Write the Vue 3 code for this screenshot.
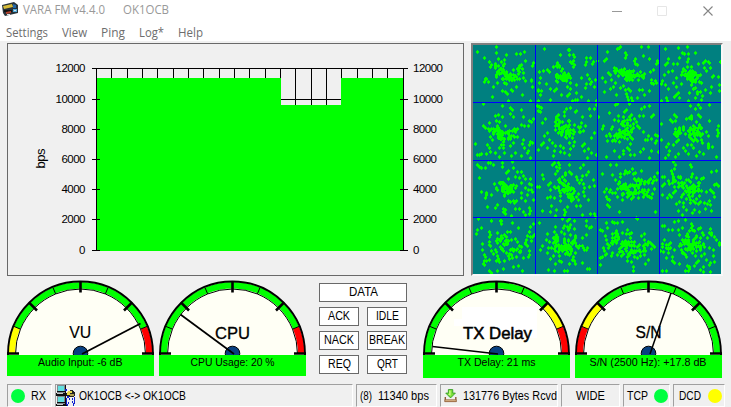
<script setup>
import { h } from 'vue'

// Single line of text fitted to an exact advance width
const Fit = (props) =>
  h('svg', { width: props.w, height: 15, viewBox: `0 0 ${props.w} 15`, style: { display: 'block', overflow: 'visible', flex: 'none' } }, [
    h('text', { x: 0, y: 12, textLength: props.w, lengthAdjust: 'spacingAndGlyphs', fill: 'currentColor', 'xml:space': 'preserve' }, props.t)
  ])
Fit.props = ['t', 'w']

const menu = [['Settings', 42], ['View', 25], ['Ping', 24], ['Log*', 25], ['Help', 25]]

const levels = [
  [12000, 68], [10000, 99], [8000, 129], [6000, 159], [4000, 189], [2000, 219], [0, 250]
]
const grid = [111, 127, 142, 157, 173, 188, 203, 219, 234, 249, 265, 280, 295, 311, 326, 341, 357, 372, 387]

// Constellation samples: each block has an origin in px, points in thirds of a px,
// and dense cores given as centre x, centre y, spread x, spread y, count
const blocks = [
  { ox: -5, oy: -5, cells: [
    { c: [[98, 92, 12, 12, 20], [124, 114, 15, 12, 24], [150, 92, 9, 16, 9]],
      p: '28,36 49,54 85,21 85,40 100,66 109,72 109,60 64,66 70,76 67,82 145,42 157,42 115,46 169,36 172,63 160,75 148,87 196,69 193,78 154,96 55,117 49,126 61,126 52,117 88,130 85,112 76,142 73,170 103,154 112,157 118,163 130,151 145,142 154,118 172,124 166,114 190,123 193,141 190,120 121,184 187,184 163,165 133,154 90,58' },
    { c: [[290, 112, 20, 12, 38], [268, 76, 8, 6, 8], [317, 65, 5, 9, 7]],
      p: '229,27 277,45 301,30 304,30 304,45 355,54 367,54 355,66 352,75 376,66 373,72 388,63 319,52 214,96 226,94 238,91 244,96 217,114 214,130 211,153 221,154 217,166 211,150 247,148 259,154 235,133 265,147 298,142 307,148 304,163 298,169 325,160 328,181 322,181 355,132 352,145 370,127 367,133 382,121 379,142 340,115 358,106 364,118 340,172 361,184 280,166 247,181 211,184 325,136 313,184 385,184' },
    { c: [[108, 282, 17, 15, 38], [80, 269, 12, 5, 8], [145, 271, 11, 5, 7]],
      p: '46,192 103,198 82,228 91,226 127,205 133,211 127,222 136,231 103,231 160,211 166,232 160,256 169,259 181,259 184,243 190,247 196,238 64,249 46,258 52,264 61,268 85,244 94,247 88,258 76,282 67,292 22,312 58,315 64,324 67,337 55,342 40,342 34,345 28,345 82,339 94,325 106,325 100,316 127,318 136,309 148,292 166,300 163,312 187,306 184,315 193,309 169,324 181,333 178,339 94,351 142,339 160,348 130,348 109,340 187,355' },
    { c: [[292, 273, 11, 18, 34], [268, 248, 8, 8, 9], [320, 266, 13, 12, 9]],
      p: '208,198 214,201 211,213 220,205 217,217 232,237 223,249 271,226 265,231 295,208 289,217 289,229 307,204 322,217 325,213 343,231 367,229 364,208 379,208 385,195 340,249 352,258 346,272 334,277 379,279 370,295 262,258 262,271 271,279 238,279 229,289 244,300 253,309 262,319 238,325 226,309 220,316 211,330 259,333 277,318 286,324 277,336 289,339 307,327 316,319 304,345 343,319 349,312 361,327 349,333 370,339 358,354 385,345 256,348 313,294 319,306' }
  ] },
  { ox: 123, oy: -5, cells: [
    { c: [[98, 105, 17, 11, 38], [72, 99, 11, 9, 10], [137, 107, 16, 8, 10]],
      p: '70,24 64,27 73,22 34,36 31,57 25,63 88,40 91,46 88,55 136,21 157,21 142,48 160,57 115,63 118,72 124,75 187,66 181,73 184,64 118,57 55,85 55,93 37,99 43,105 19,114 28,126 46,120 25,156 43,147 58,129 52,142 61,165 73,144 82,138 88,150 97,148 103,153 91,163 94,172 97,181 109,184 124,175 130,151 139,151 145,166 160,153 166,130 172,132 181,129 166,120 163,97 172,90 178,123 106,175' },
    { c: [[285, 102, 17, 14, 44], [303, 120, 8, 10, 7]],
      p: '208,27 217,58 247,24 274,22 259,40 265,42 277,43 298,39 208,75 214,69 232,72 250,54 244,72 277,58 274,67 307,72 322,69 328,64 340,69 337,66 325,84 331,94 343,85 373,67 352,109 367,112 346,142 370,136 343,159 328,151 370,153 205,105 199,123 208,135 196,132 217,148 211,174 229,94 217,97 241,115 232,130 241,141 247,160 256,132 235,172 241,166 286,136 292,148 280,160 277,183 298,174 304,156 313,157 319,169 304,163 250,174 214,184 196,184 316,181 349,111' },
    { c: [[94, 265, 15, 14, 24], [73, 291, 18, 8, 22]],
      p: '100,192 40,219 7,231 58,195 64,192 67,228 85,217 91,211 82,232 100,231 106,226 115,238 130,228 142,229 136,207 145,201 160,199 172,226 166,232 112,252 121,246 124,258 130,264 55,241 67,244 49,262 46,268 22,258 19,268 31,288 43,288 40,282 34,303 49,303 31,351 55,333 82,333 94,324 82,342 100,330 103,345 115,346 133,336 157,288 154,301 166,297 178,285 184,288 181,304 178,310 142,277 148,300 109,298 103,312 142,327 166,333 187,336 160,354 70,351' },
    { c: [[290, 274, 16, 14, 35], [279, 234, 8, 5, 7], [241, 290, 5, 14, 8]],
      p: '340,195 307,195 298,207 313,204 283,199 235,226 241,231 238,244 196,252 223,241 229,247 307,226 313,231 340,244 367,259 364,271 367,279 364,288 238,268 250,264 262,270 253,279 241,279 310,255 316,264 301,246 331,277 337,288 337,312 337,318 337,325 319,309 316,301 304,303 292,303 286,316 292,324 310,336 322,342 349,321 247,300 232,315 217,312 211,321 196,300 220,333 217,345 238,352 247,342 262,324 274,315 268,333 277,342 301,348 361,351 208,354' }
  ] },
  { ox: -5, oy: 113, cells: [
    { c: [[116, 91, 18, 13, 45], [96, 73, 10, 8, 8]],
      p: '28,21 34,27 40,30 61,15 67,16 76,21 103,27 103,15 52,30 121,40 115,45 133,12 136,30 160,43 148,42 34,60 154,60 142,58 166,55 172,63 187,64 184,78 190,81 190,97 181,97 172,90 160,75 178,111 193,102 40,102 55,106 52,121 55,112 70,111 58,147 88,142 82,150 106,153 112,156 106,162 112,168 109,115 121,130 127,132 136,130 139,135 145,130 160,106 160,120 154,154 172,129 184,151 187,160 184,169 172,172 166,163 142,154 130,174 196,127' },
    { c: [[294, 96, 15, 15, 35], [278, 73, 10, 12, 12], [316, 113, 12, 11, 10]],
      p: '259,15 271,15 274,21 274,30 268,40 262,48 253,21 265,27 223,52 226,63 208,87 214,88 247,75 241,82 247,96 262,91 247,117 238,120 259,120 292,52 292,46 304,43 310,48 304,21 337,30 346,21 361,43 343,55 355,52 328,66 340,67 334,76 349,91 346,78 376,67 364,88 379,85 325,58 331,127 325,144 337,144 349,115 361,126 346,103 367,168 379,168 382,177 310,130 298,147 289,156 292,162 289,172 265,157 262,174 247,163 250,144 223,160 343,172' },
    { c: [[482, 95, 16, 13, 40], [517, 79, 11, 12, 13], [459, 81, 10, 10, 9], [525, 105, 10, 7, 7]],
      p: '427,21 445,22 403,48 433,51 442,66 457,58 457,48 469,48 472,40 478,45 484,43 493,33 496,48 502,45 499,63 520,67 541,70 568,46 559,58 547,64 556,69 553,76 541,76 559,93 565,67 541,97 553,109 544,118 550,121 538,115 427,97 415,94 409,102 424,102 433,106 442,106 415,117 418,123 424,127 418,142 424,147 454,162 448,117 463,112 463,126 478,117 490,124 496,118 505,106 511,120 514,103 526,118 535,111 520,40 562,163' },
    { c: [[667, 95, 20, 14, 45], [626, 66, 9, 9, 10]],
      p: '583,57 589,57 610,39 613,48 619,34 622,22 667,22 670,27 616,13 601,69 604,78 589,78 583,84 616,72 619,87 622,99 616,105 631,57 643,75 655,66 673,49 670,58 661,66 685,60 700,64 706,61 691,75 745,39 730,42 715,102 727,97 739,81 745,79 751,85 736,106 739,117 733,102 724,129 727,142 709,136 718,139 694,115 685,123 697,132 691,138 676,129 682,136 667,127 667,136 655,124 646,135 634,133 625,138 640,117 604,112 583,112 598,120 610,118 631,160 646,147 655,156 673,166 679,157 694,162 712,153 643,172 730,159' },
    { c: [[104, 250, 13, 14, 24], [132, 278, 15, 10, 12]],
      p: '31,184 70,190 100,189 100,198 97,190 133,196 40,210 28,216 25,228 64,223 67,232 64,238 64,253 67,264 88,226 127,222 151,210 187,207 196,198 184,222 178,235 187,238 175,246 172,256 190,250 193,238 199,232 178,265 184,280 184,291 181,297 142,243 130,246 148,252 154,264 145,276 154,282 160,267 172,259 43,258 64,261 43,276 70,280 76,288 85,282 88,294 91,303 82,277 49,291 52,297 64,307 55,309 49,309 49,322 46,318 64,339 85,309 94,312 109,309 121,295 124,303 133,301 145,297 88,339 106,333 136,327 151,324 70,345 163,339 166,300' },
    { c: [[292, 264, 17, 15, 45], [262, 250, 9, 8, 10]],
      p: '214,195 262,207 283,184 298,190 304,184 319,190 289,205 298,207 304,211 286,210 301,217 319,213 307,201 355,190 355,204 370,208 364,210 280,223 289,229 307,231 355,232 343,241 259,223 265,232 238,229 256,241 262,237 235,246 244,253 241,270 250,271 262,264 262,279 223,265 217,277 238,285 256,295 271,282 319,246 322,235 334,264 343,264 346,270 349,276 358,270 355,277 331,270 310,279 322,285 304,291 292,289 316,297 313,307 319,309 322,318 304,318 247,303 280,312 262,318 274,309 241,337 259,340 289,339 298,339 358,333 364,334 343,315' },
    { c: [[480, 264, 17, 14, 32], [445, 244, 13, 11, 14], [514, 267, 16, 10, 10]],
      p: '415,195 433,193 439,195 448,195 463,192 505,180 508,184 397,216 403,219 397,216 418,211 445,219 442,226 433,228 445,235 478,217 484,228 490,225 475,228 463,225 529,229 520,235 529,246 532,258 541,253 547,256 559,268 550,273 553,262 538,262 412,235 415,246 430,255 424,264 418,258 406,270 421,270 409,279 412,291 403,297 397,301 415,289 433,286 430,294 454,273 454,282 448,291 460,295 466,289 478,297 484,291 496,285 499,297 508,300 517,294 529,291 541,307 496,327 496,339 478,310 397,321 490,312 526,264 532,318' },
    { c: [[666, 258, 20, 13, 36], [689, 262, 10, 6, 10]],
      p: '589,204 583,205 601,216 613,217 619,192 631,189 652,187 643,210 670,198 673,204 670,211 664,219 673,217 679,220 691,214 697,210 727,213 730,225 724,225 703,225 706,232 631,216 634,232 658,228 655,235 661,237 685,235 697,241 589,246 583,258 595,262 601,262 607,256 595,270 583,267 607,270 601,274 577,280 586,283 601,286 619,276 634,264 640,277 646,285 652,291 655,297 643,285 673,286 685,280 697,276 709,268 718,241 730,232 739,237 724,270 736,276 754,262 754,256 745,246 709,289 700,294 682,295 613,297 595,300 619,316 613,309 658,324 664,333 661,339 664,328 685,315 691,310 679,325 715,307 724,321 727,316 736,294 706,327 739,313 583,340 595,340 706,342 727,343 652,340 634,318 697,337' }
  ] }
]

let seed = 4471
const rnd = () => (seed = (seed * 16807) % 2147483647) / 2147483647
const gauss = () => rnd() + rnd() + rnd() + rnd() - 2

const diamond = (x, y) => `M${x} ${y - 2}h1v1h1v2h-1v1h-1v-1h-1v-2h1z`
const dots = blocks.map(b => b.cells.map(cell => {
  const pts = cell.p.split(' ').map(s => s.split(',').map(Number))
  for (const [cx, cy, sx, sy, n] of cell.c) {
    for (let i = 0; i < n; i++) pts.push([cx + gauss() * sx * 1.4, cy + gauss() * sy * 1.4])
  }
  return pts.map(([x, y]) => diamond(Math.floor(x / 3) + b.ox, Math.round(y / 3) + b.oy)).join('')
}).join('')).join('')

// Arc between two angles (degrees, counter-clockwise from the right)
const pt = (r, a) => [73.5 + r * Math.cos(a * Math.PI / 180), 74 - r * Math.sin(a * Math.PI / 180)]
const band = (a, b) => {
  const [x1, y1] = pt(72, a), [x2, y2] = pt(72, b), [x3, y3] = pt(65.5, b), [x4, y4] = pt(65.5, a)
  return `M${x1} ${y1}A72 72 0 0 1 ${x2} ${y2}L${x3} ${y3}A65.5 65.5 0 0 0 ${x4} ${y4}Z`
}
const spoke = (r1, r2, a) => {
  const [x1, y1] = pt(r1, a), [x2, y2] = pt(r2, a)
  return `M${x1} ${y1}L${x2} ${y2}`
}
const G = '#00ff00', Y = '#ffff00', R = '#ff0000'
const gauges = [
  { name: 'VU', nx: 62.2, ny: 57.5, nw: 22, bold: 0.15, zones: [[180, 157.5, Y], [157.5, 22.5, G], [22.5, 0, R]], tip: [133.5, 43.5], nwid: 1.8, text: 'Audio Input: -6 dB', tx: 31, tw: 84.5 },
  { name: 'CPU', nx: 56, ny: 58.5, nw: 35, bold: 0.3, zones: [[180, 22.5, G], [22.5, 0, R]], tip: [21.5, 34.5], nwid: 1.7, text: 'CPU Usage: 20 %', tx: 31.5, tw: 84 },
  { name: 'TX Delay', nx: 40, ny: 58.5, nw: 69, bold: 0.5, patch: true, zones: [[180, 45, G], [45, 22.5, Y], [22.5, 0, R]], tip: [9.5, 66.5], nwid: 1.7, text: 'TX Delay: 21 ms', tx: 34.5, tw: 78, tall: true },
  { name: 'S/N', nx: 60.5, ny: 57.5, nw: 26, bold: 0.3, zones: [[180, 157.5, R], [157.5, 135, Y], [135, 0, G]], tip: [96, 13], nwid: 1.5, text: 'S/N (2500 Hz): +17.8 dB', tx: 14.5, tw: 117, tall: true }
]
const flags = [['DATA', 29], ['ACK', 22], ['IDLE', 23], ['NACK', 30], ['BREAK', 36], ['REQ', 23], ['QRT', 21]]
</script>

<template>
  <div class="window">
    <header class="titlebar">
      <svg class="appicon" width="16" height="14" viewBox="0 0 16 14">
        <path d="M0 3L12 0l4 3v8L3 14 1 11z" fill="#27333a" />
        <path d="M1 4l9-2 1 3-9 2z" fill="#d6bb38" />
        <path d="M2 8h8v2H2z" fill="#111" />
        <path d="M4 10l5-1v2l-5 1z" fill="#b4402c" />
        <path d="M11 2l3 1v3h-3z" fill="#2468a8" />
        <path d="M11 7h4v3h-4z" fill="#50a8d8" />
        <path d="M12 8h2v1h-2zM5 12h3v1H5z" fill="#d8e4e8" />
      </svg>
      <Fit t="VARA FM v4.4.0" :w="82" />
      <Fit class="call" t="OK1OCB" :w="46" />
      <div class="controls">
        <svg width="102" height="12" viewBox="0 0 102 12" fill="none">
          <path d="M0 5.5h10" stroke="#999" />
          <path d="M45.5.5h9v9h-9z" stroke="#e6e6e6" />
          <path d="M91.500.5l9 9m0-9l-9 9" stroke="#858585" stroke-width="1.1" />
        </svg>
      </div>
    </header>
    <nav class="menu"><Fit v-for="m in menu" :key="m[0]" :t="m[0]" :w="m[1]" /></nav>

    <main class="panels">
      <section class="chart">
        <svg width="455" height="231" viewBox="8 44 455 231" shape-rendering="crispEdges">
          <path :d="grid.map(x => `M${x} 68h1v40h-1z`).join('')" />
          <path d="M97 99h306v1H97z" />
          <path d="M97 78h184v27h60V78h63v173H97z" fill="#00ff00" />
          <path d="M96 68h1v183h-1zM403 68h1v183h-1zM92 68h316v1H92z" />
          <path :d="levels.map(l => `M92 ${l[1]}h8v1h-8zM400 ${l[1]}h8v1h-8z`).join('')" />
          <g class="ticks">
            <g v-for="l in levels" :key="l[0]">
              <text x="85.500" :y="l[1] + 4" text-anchor="end" :textLength="String(l[0]).length * 6">{{ l[0] }}</text>
              <text x="413" :y="l[1] + 4" :textLength="String(l[0]).length * 6">{{ l[0] }}</text>
            </g>
          </g>
          <text class="unit" transform="translate(45 168.500) rotate(-90)" textLength="20">bps</text>
        </svg>
      </section>
      <section class="scatter">
        <svg width="248" height="229" viewBox="0 0 248 229" shape-rendering="crispEdges">
          <path :d="dots" fill="#00ff00" />
          <path d="M62 0h1v229h-1zM124 0h1v229h-1zM186 0h1v229h-1zM0 57h248v1H0zM0 115h248v1H0zM0 172h248v1H0z" fill="#0000ff" />
        </svg>
      </section>
    </main>

    <section class="meters">
      <template v-for="(g, i) in gauges" :key="g.name">
        <div v-if="i === 2" class="flags">
          <div v-for="f in flags" :key="f[0]" class="flag"><Fit :t="f[0]" :w="f[1]" /></div>
        </div>
        <div class="gauge">
          <svg width="147" height="75" viewBox="0 0 147 75">
            <path d="M.5 75V74a73 73 0 0 1 146 0v1z" fill="#fffff5" />
            <path v-if="g.patch" d="M39 27h75v31H39zM31 39h8v7h-8z" fill="#fff" />
            <path v-for="z in g.zones" :key="z[0]" :d="band(z[0], z[1])" :fill="z[2]" />
            <path d="M1 75V74a72.500 72.500 0 0 1 145 0v1" fill="none" stroke="#000" stroke-width="1.900" />
            <path d="M8.500 74a65 65 0 0 1 130 0" fill="none" stroke="#000" />
            <path :d="[22.5, 67.5, 112.5, 157.5].map(a => spoke(72, 65, a)).join('')" stroke="#000" />
            <path :d="[45, 90, 135].map(a => spoke(73, 61.500, a)).join('') + 'M0 73.500h12M135 73.500h12'" stroke="#000" stroke-width="2.600" />
            <circle cx="73.500" cy="73.500" r="7.300" fill="#084080" stroke="#000" />
            <text class="name" :x="g.nx" :y="g.ny" :textLength="g.nw" lengthAdjust="spacingAndGlyphs" stroke="#000" :stroke-width="g.bold">{{ g.name }}</text>
            <path :d="`M75 74L${g.tip[0]} ${g.tip[1]}`" stroke="#000" :stroke-width="g.nwid" />
          </svg>
          <div class="caption" :class="{ tall: g.tall }">
            <svg width="147" height="16"><text :x="g.tx" y="11" :textLength="g.tw" lengthAdjust="spacingAndGlyphs">{{ g.text }}</text></svg>
          </div>
        </div>
      </template>
    </section>

    <footer class="status">
      <div class="cell rx"><i class="led" /><Fit t="RX" :w="15" /></div>
      <div class="cell link">
        <svg width="20" height="21" viewBox="0 0 20 21" shape-rendering="crispEdges">
          <g v-for="y in [0, 11]" :key="y" :transform="`translate(0 ${y})`">
            <path d="M1 0h9v8H1z" fill="#808890" /><path d="M2 1h6v5H2z" fill="#60e0e0" /><path d="M9 0h1v8H9zM0 8h11v3H0zM1 6h8v1H1z" fill="#111" /><path d="M1 8h6v1H1z" fill="#c8c8c8" />
          </g>
          <path d="M12 6l4-1 3 2v3l-2 2h-5l-2-2z" fill="#222" /><path d="M12 6h4v2h-2v2h-3V8z" fill="#e8d848" /><path d="M14 9h4v2h-4z" fill="#b0a050" />
          <path d="M12 12h6v9h-7z" fill="#f0f0f0" /><path d="M9 4h2v2H9zM11 11h2v2h-2zM10 13h1v7h-1zM18 12h1v7h-1zM13 13h1v2h-1zM16 13h1v2h-1zM11 19h1v2h-1zM17 18h1v3h-1zM12 17h1v2h-1zM16 16h1v2h-1z" fill="#1020d0" />
        </svg>
        <Fit t="OK1OCB <-> OK1OCB" :w="107" />
      </div>
      <div class="cell rate"><Fit t="(8)" :w="12" /><Fit t="11340 bps" :w="51" /></div>
      <div class="cell bytes">
        <svg width="16" height="15" viewBox="0 0 16 15.500">
          <path d="M1.500 9.500v5h12v-5" fill="none" stroke="#8c5a36" stroke-width="1.600" /><path d="M1 12.500h13v2.300H1z" fill="#d6b184" stroke="#8c5a36" stroke-width=".7" />
          <path d="M5 1h5v4h3l-5.500 5.500L2 5h3z" fill="#7ee03a" stroke="#2f9a20" />
          <path d="M6 2h1.500v6L4.500 6H6z" fill="#d4ff90" />
        </svg>
        <Fit t="131776 Bytes Rcvd" :w="94" />
      </div>
      <div class="cell wide"><Fit t="WIDE" :w="29" /></div>
      <div class="cell tcp"><Fit t="TCP" :w="21" /><i class="led" /></div>
      <div class="cell dcd"><Fit t="DCD" :w="22" /><i class="led yellow" /></div>
    </footer>
  </div>
</template>

<style>
body { background: #f0f0f0; overflow: hidden; }
</style>
<style scoped>
.window { width: 731px; height: 407px; background: #f0f0f0; font: 12.5px "Liberation Sans", Arial, sans-serif; color: #000; overflow: hidden; }
.titlebar { display: flex; align-items: flex-start; height: 22px; box-sizing: border-box; padding: 2px 17px 0 2px; background: #fff; color: #999; font: 12px "Open Sans", sans-serif; }
.appicon { margin-right: 5px; }
.call { margin-left: 18px; }
.controls { margin-left: auto; padding-top: 3px; }
.menu { display: flex; gap: 14px; height: 19px; box-sizing: border-box; padding: 3px 6px; background: #fff; color: #6d6d6d; font: 12px "Open Sans", sans-serif; }
.panels { display: flex; gap: 7px; padding: 2px 8px 0 7px; }
.chart { border: 1px solid #696969; height: 231px; }
.chart svg, .scatter svg { display: block; }
.ticks { font-size: 11.500px; }
.unit { font-size: 13px; }
.scatter { width: 248px; height: 229px; background: #008080; border: 2px solid; border-color: #808080 #f8f8f8 #f8f8f8 #808080; }
.meters { display: flex; align-items: flex-start; height: 108px; box-sizing: border-box; padding: 4px 9px 0 7px; }
.gauge { width: 147px; margin-right: 5px; }
.gauge > svg { display: block; }
.name { font-size: 16px; }
.caption { height: 21px; background: #00ff00; font-size: 11.500px; }
.caption.tall { height: 23px; }
.caption svg { display: block; }
.flags { display: grid; grid-template-columns: 40px 40px; gap: 5px 8px; margin: 3px 16px 0 8px; }
.flag { height: 17px; border: 1px solid #696969; background: #fff; display: flex; justify-content: center; }
.flag:first-child { grid-column: span 2; }
.status { display: flex; gap: 3px; padding-left: 7px; height: 23px; }
.cell { display: flex; align-items: center; box-sizing: border-box; height: 23px; border: 1px solid; border-color: #a0a0a0 #fff #fff #a0a0a0; flex: none; }
.led { width: 14px; height: 14px; border-radius: 50%; background: #00ff40; }
.led.yellow { background: #ffff00; }
.rx { width: 45px; padding-left: 3px; gap: 6px; }
.link { width: 298px; gap: 3px; }
.rate { width: 81px; padding-left: 3px; gap: 6px; }
.bytes { width: 118px; padding-left: 3px; gap: 5px; }
.wide { width: 59px; padding-left: 14px; }
.tcp { width: 47px; padding-left: 3px; gap: 6px; }
.dcd { width: 52px; padding-left: 5px; gap: 7px; }
</style>
